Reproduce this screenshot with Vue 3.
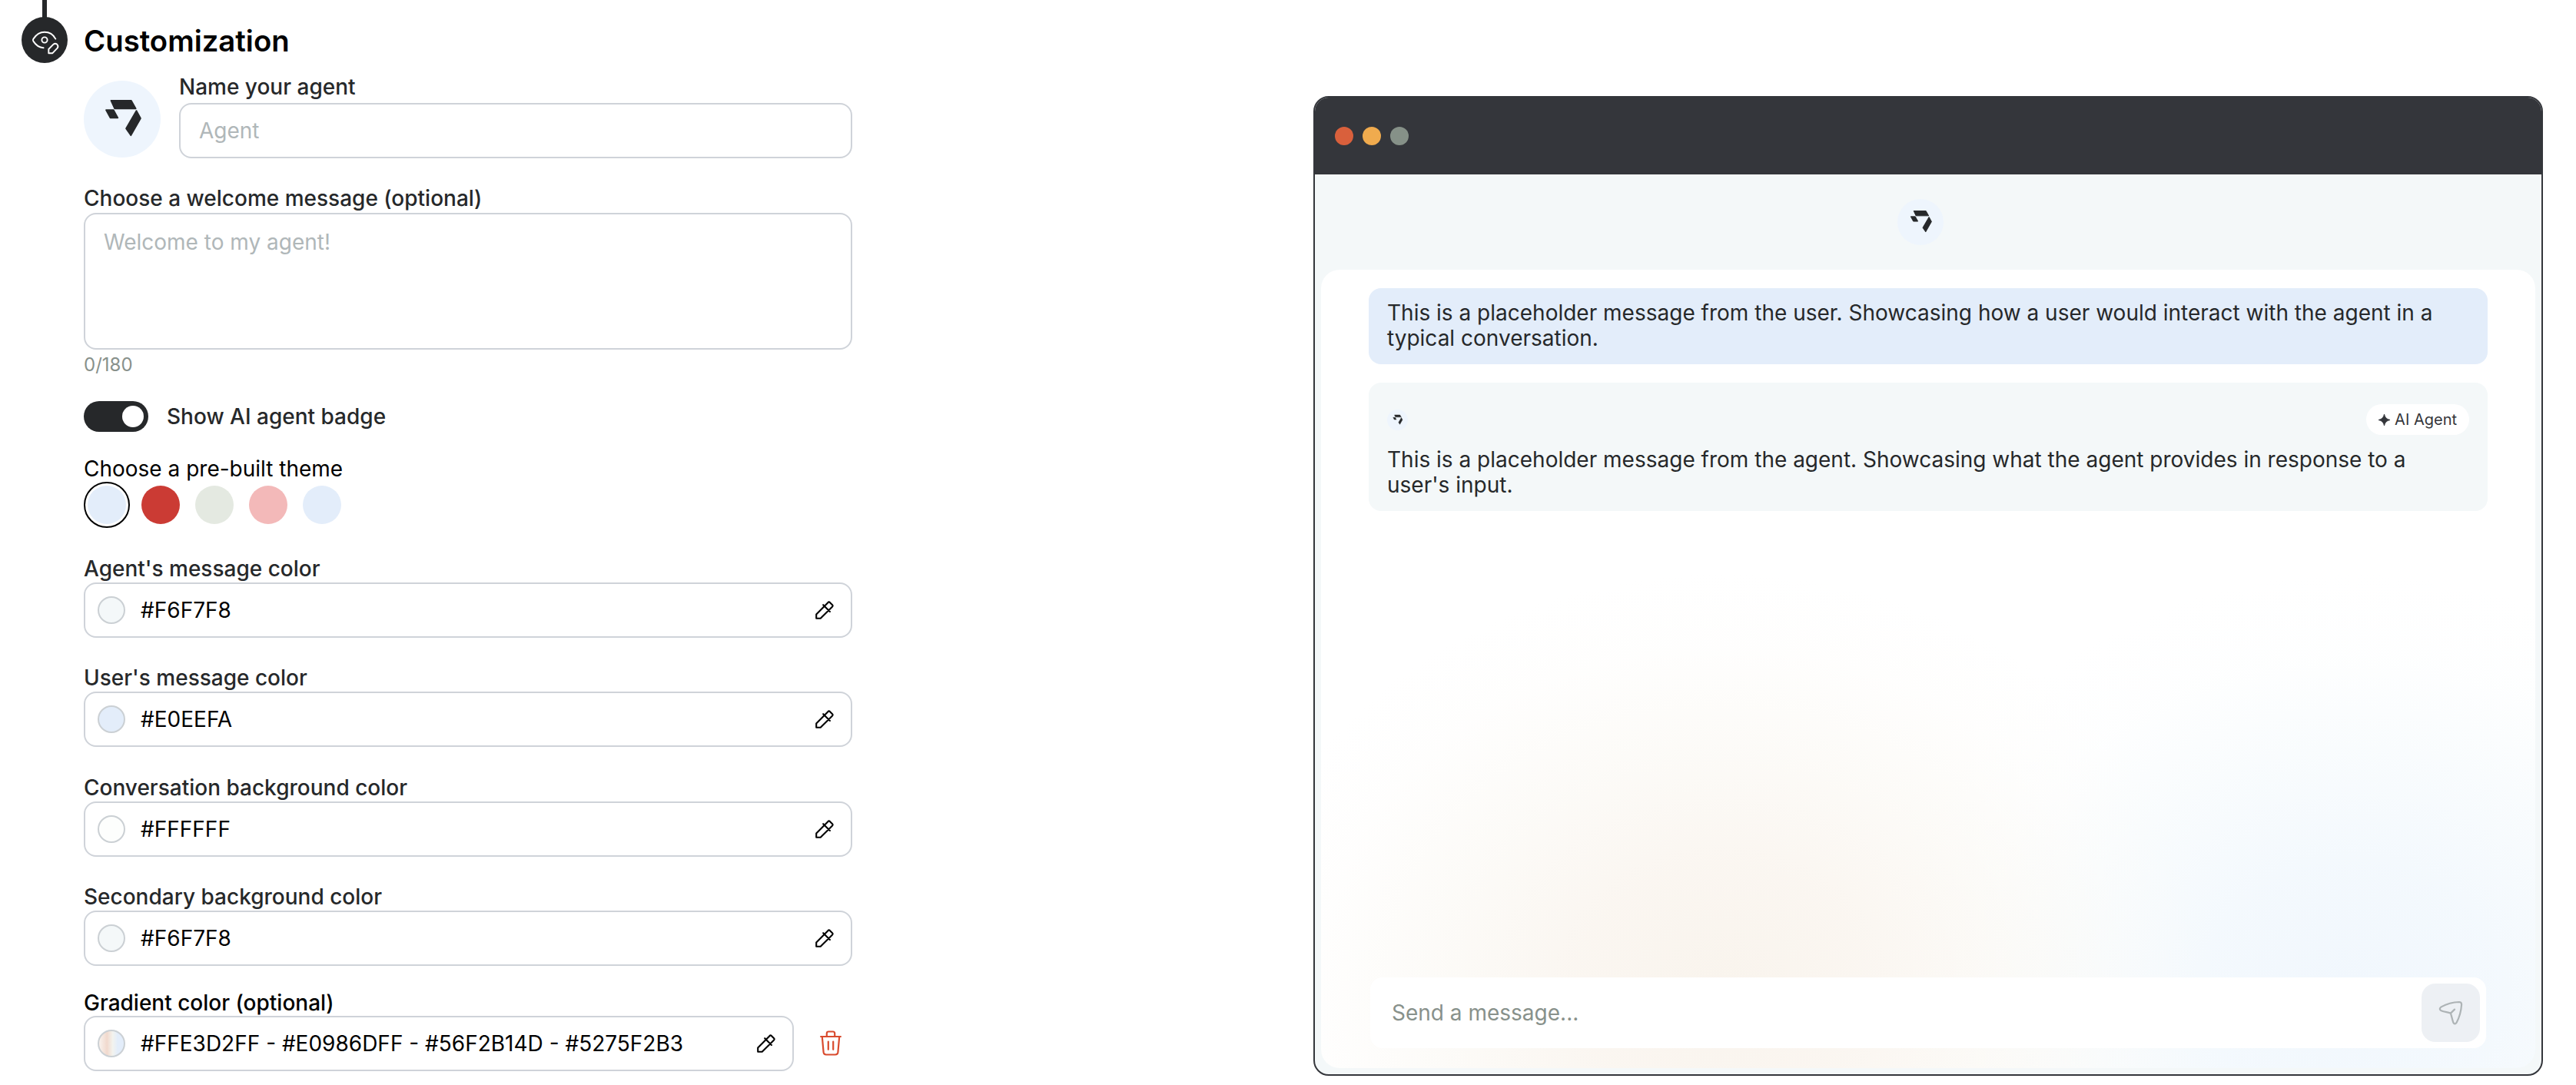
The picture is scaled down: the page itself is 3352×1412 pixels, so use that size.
<script setup>
import { h } from 'vue'

const themes = ['#e3edfa', '#cb3b34', '#e4e9e1', '#f3b9b9', '#e3edfa']

const colorFields = [
  { label: "Agent's message color", value: '#F6F7F8', fill: '#f4f8f9' },
  { label: "User's message color", value: '#E0EEFA', fill: '#e3edfa' },
  { label: 'Conversation background color', value: '#FFFFFF', fill: '#fdfefd' },
  { label: 'Secondary background color', value: '#F6F7F8', fill: '#f4f8f9' },
]

const AgentLogo = () =>
  h('svg', { viewBox: '0 0 100 100', width: '100%', height: '100%' }, [
    h('path', {
      d: 'M35.4 25.8H61.9L67.8 36.4H40.2ZM28.9 38.1H38.8L44.4 48.4H34.5ZM68.5 39L74 49L61.3 71.4L55 62.2Z',
      fill: '#26282a',
      stroke: '#26282a',
      'stroke-width': 1.6,
      'stroke-linejoin': 'round',
    }),
  ])

const PencilIcon = () =>
  h(
    'svg',
    {
      viewBox: '0 0 24 24',
      width: 24,
      height: 24,
      fill: 'none',
      stroke: '#000',
      'stroke-width': 2.1,
      'stroke-linejoin': 'round',
      'stroke-linecap': 'round',
    },
    [h('path', { d: 'M1.2 22.8V17.6L16.6 1.9Q17.7 0.9 18.8 1.9L22.1 5.2Q23.1 6.3 22.1 7.4L6.7 22.8ZM10.2 5.2L18.9 13.9' })],
  )
</script>

<template>
  <main class="page">
    <div class="rail">
      <div class="rail-line"></div>
      <div class="rail-badge">
        <svg width="60" height="60" viewBox="0 0 60 60" fill="none" stroke="#fff" stroke-width="1.9" stroke-linecap="round" stroke-linejoin="round">
          <path d="M44.3 28.6C41.2 22.8 36.4 19.8 30 19.8C22.8 19.8 18.2 24.4 15.4 28.6Q14.4 30.1 15.4 31.6C18.4 36.3 22.4 39.9 28.6 40.2" />
          <circle cx="30" cy="30" r="3.6" />
          <path d="M35.3 47.2V42L41.5 35.7Q43.7 33.8 46.1 35.6Q48.6 38 46.6 40.7L40.4 47.2Z" />
        </svg>
      </div>
    </div>

    <section class="form">
      <h1 class="title">Customization</h1>

      <div class="name-row">
        <div class="avatar"><AgentLogo /></div>
        <div class="name-field">
          <div class="label">Name your agent</div>
          <div class="box input placeholder">Agent</div>
        </div>
      </div>

      <div class="label welcome-label">Choose a welcome message (optional)</div>
      <div class="box textarea placeholder">Welcome to my agent!</div>
      <div class="counter">0/180</div>

      <div class="toggle-row">
        <div class="toggle"><div class="knob"></div></div>
        <div class="label">Show AI agent badge</div>
      </div>

      <div class="label theme-label">Choose a pre-built theme</div>
      <div class="themes">
        <div v-for="(c, i) in themes" :key="i" class="theme" :class="{ selected: i === 0 }">
          <div class="theme-dot" :style="{ background: c }"></div>
        </div>
      </div>

      <div class="colors">
        <div v-for="f in colorFields" :key="f.label" class="color-field">
          <div class="label">{{ f.label }}</div>
          <div class="box color-box">
            <div class="swatch" :style="{ background: f.fill }"></div>
            <span class="value">{{ f.value }}</span>
            <PencilIcon />
          </div>
        </div>
      </div>

      <div class="label gradient-label">Gradient color (optional)</div>
      <div class="gradient-row">
        <div class="box color-box">
          <div class="swatch gradient-swatch"></div>
          <span class="value">#FFE3D2FF - #E0986DFF - #56F2B14D - #5275F2B3</span>
          <PencilIcon />
        </div>
        <svg class="trash" width="28" height="34" viewBox="0 0 28 34" fill="none" stroke="#d94b2e" stroke-width="2.2" stroke-linecap="round" stroke-linejoin="round">
          <path d="M1.1 8H26.9M8.8 8V4Q8.8 1.5 11.2 1.5H16.8Q19.2 1.5 19.2 4V8M2.8 8L4.6 28.4Q5 31.5 8 31.5H20Q23 31.5 23.4 28.4L25.2 8M10.8 14.5V24.8M17.2 14.5V24.8" />
        </svg>
      </div>
    </section>

    <section class="window">
      <header class="window-bar">
        <i class="dot red"></i>
        <i class="dot amber"></i>
        <i class="dot grey"></i>
      </header>
      <div class="window-head">
        <div class="avatar medium"><AgentLogo /></div>
      </div>
      <div class="pane">
        <div class="bubble user">
          This is a placeholder message from the user. Showcasing how a user would interact with the agent in a
          typical conversation.
        </div>
        <div class="bubble agent">
          <div class="bubble-top">
            <div class="avatar small"><AgentLogo /></div>
            <div class="ai-badge">
              <svg width="15" height="15" viewBox="0 0 16 16"><path d="M8 0C8.9 4.6 11.4 7.1 16 8C11.4 8.9 8.9 11.4 8 16C7.1 11.4 4.6 8.9 0 8C4.6 7.1 7.1 4.6 8 0Z" fill="#34363b" stroke="#34363b" stroke-width=".9" /></svg>
              <span>AI Agent</span>
            </div>
          </div>
          This is a placeholder message from the agent. Showcasing what the agent provides in response to a
          user's input.
        </div>
        <div class="composer">
          <span class="composer-text">Send a message...</span>
          <div class="send">
            <svg width="32" height="32" viewBox="0 0 32 32" fill="none" stroke="#adb3b5" stroke-width="2.2" stroke-linecap="round" stroke-linejoin="round">
              <path d="M3.6 8.4C10.5 4.6 18.6 2.3 26.9 2Q30.1 2 30.1 5.2C29.6 13.4 27.2 22 23.5 28.9Q21.3 32.2 19.3 28.6C17.9 24.8 17.3 20.8 15.9 16.6C11.6 15.2 7.6 14.8 3.6 13.2Q0 11 3.6 8.4ZM15.9 16.6L21 11.6" />
            </svg>
          </div>
        </div>
      </div>
    </section>
  </main>
</template>

<style>
body {
  background: #fff;
}
</style>

<style scoped>
* {
  box-sizing: border-box;
}
.page {
  display: flex;
  width: 3352px;
  height: 1412px;
  overflow: hidden;
  background: #fff;
  font-family: Inter, 'Liberation Sans', sans-serif;
  font-size: 28px;
  line-height: 34px;
  color: #26282a;
}
.rail {
  width: 60px;
  margin-left: 28px;
  display: flex;
  flex-direction: column;
  align-items: center;
}
.rail-line {
  width: 6px;
  height: 23px;
  margin-bottom: -1px;
  background: #26282a;
}
.rail-badge {
  width: 60px;
  height: 60px;
  border-radius: 50%;
  background: #26282a;
}
.form {
  width: 1000px;
  margin-left: 21px;
}
.title {
  margin: 28px 0 0;
  font-size: 38.3px;
  font-weight: 600;
  line-height: 50px;
  color: #000;
}
.name-row {
  display: flex;
  gap: 24px;
  margin-top: 18px;
}
.avatar {
  flex: none;
  width: 100px;
  height: 100px;
  border-radius: 50%;
  background: #eef5fd;
}
.avatar svg {
  display: block;
}
.name-row .avatar {
  margin-top: 9px;
}
.name-field {
  flex: 1;
}
.label {
  height: 34px;
  font-weight: 500;
  white-space: nowrap;
}
.box {
  border: 2px solid #cfd3d9;
  border-radius: 16px;
  background: #fff;
}
.placeholder {
  color: #b0b7b9;
}
.input {
  height: 72px;
  margin-top: 4px;
  padding: 17px 24px;
}
.welcome-label {
  margin-top: 35px;
}
.textarea {
  height: 178px;
  margin-top: 2px;
  padding: 19px 24px;
}
.counter {
  margin-top: 5px;
  font-size: 24px;
  line-height: 30px;
  color: #88918b;
}
.toggle-row {
  display: flex;
  align-items: center;
  gap: 24px;
  margin-top: 32px;
}
.toggle {
  display: flex;
  justify-content: flex-end;
  width: 84px;
  height: 40px;
  padding: 6px;
  border-radius: 20px;
  background: #26282a;
}
.knob {
  width: 28px;
  height: 28px;
  border-radius: 50%;
  background: #fff;
}
.theme-label {
  margin-top: 31px;
  font-weight: 400;
  color: #000;
}
.themes {
  display: flex;
  gap: 10px;
}
.theme {
  width: 60px;
  height: 60px;
  padding: 3px;
  border: 2px solid transparent;
  border-radius: 50%;
}
.theme.selected {
  border-color: #000;
}
.theme-dot {
  width: 50px;
  height: 50px;
  border-radius: 50%;
}
.colors {
  display: flex;
  flex-direction: column;
  gap: 35.3px;
  margin-top: 36px;
}
.color-field .color-box {
  margin-top: 1px;
}
.color-box {
  display: flex;
  align-items: center;
  height: 72px;
  padding: 0 22px 0 16px;
}
.swatch {
  width: 36px;
  height: 36px;
  border: 2px solid #cbd0d4;
  border-radius: 50%;
}
.gradient-swatch {
  background: linear-gradient(90deg, #f8efe9 5%, #f1d9cd 32%, #f3f3ee 55%, #e3edfa 75%, #e3edfa);
}
.value {
  flex: 1;
  margin-left: 20px;
  color: #000;
  white-space: nowrap;
}
.gradient-label {
  margin-top: 31px;
  color: #000;
}
.gradient-row {
  display: flex;
  align-items: center;
}
.gradient-row .color-box {
  width: 924px;
}
.trash {
  margin-left: 34px;
}
.window {
  display: flex;
  flex-direction: column;
  width: 1600px;
  height: 1275px;
  margin: 125px 0 0 600px;
  border: 2px solid #34363b;
  border-radius: 20px;
  overflow: hidden;
  background: #f4f8f9;
}
.window-bar {
  display: flex;
  gap: 12px;
  height: 100px;
  padding: 38px 26px;
  background: #34363b;
}
.dot {
  width: 24px;
  height: 24px;
  border-radius: 50%;
}
.red {
  background: #d9603c;
}
.amber {
  background: #f0ab4e;
}
.grey {
  background: #869188;
}
.window-head {
  display: flex;
  justify-content: center;
  height: 124px;
  padding: 32px 21px 0 0;
}
.medium {
  width: 60px;
  height: 60px;
}
.pane {
  flex: 1;
  display: flex;
  flex-direction: column;
  margin: 0 8px 8px;
  padding: 24px 62px 26px;
  border-radius: 24px;
  background:
    radial-gradient(ellipse 640px 540px at 33% 90%, rgba(249, 244, 237, 1), rgba(250, 245, 239, 0.88) 30%, rgba(250, 247, 241, 0.52) 58%, rgba(252, 250, 246, 0.2) 82%, rgba(255, 255, 255, 0)),
    radial-gradient(ellipse 620px 540px at 85% 90%, rgba(241, 247, 253, 1), rgba(242, 248, 253, 0.88) 30%, rgba(243, 249, 252, 0.5) 58%, rgba(248, 252, 253, 0.18) 80%, rgba(255, 255, 255, 0)),
    #fff;
}
.bubble {
  padding: 16px 24px 0;
  border-radius: 16px;
  line-height: 33px;
}
.user {
  height: 99px;
  background: #e3edfa;
}
.agent {
  height: 167px;
  margin-top: 24px;
  padding-top: 28px;
  background: #f4f8f9;
}
.bubble-top {
  display: flex;
  align-items: center;
  justify-content: space-between;
  margin-bottom: 16px;
}
.small {
  width: 27px;
  height: 27px;
}
.ai-badge {
  display: flex;
  align-items: center;
  gap: 6px;
  height: 40px;
  padding: 1px 16px 0;
  border-radius: 20px;
  background: #fff;
  font-size: 20px;
  color: #34363b;
}
.composer {
  display: flex;
  align-items: center;
  justify-content: space-between;
  height: 92px;
  margin: auto 2px 0;
  padding: 0 8px 0 28px;
  border-radius: 16px;
  background: #fff;
}
.composer-text {
  color: #88918b;
}
.send {
  display: grid;
  place-items: center;
  width: 76px;
  height: 76px;
  border-radius: 18px;
  background: #edf0f4;
}
</style>
